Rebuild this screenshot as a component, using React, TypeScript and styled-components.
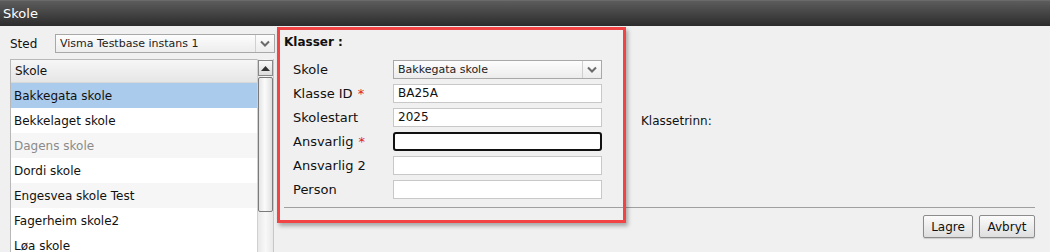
import React from "react";
import styled, { createGlobalStyle } from "styled-components";

const GlobalStyle = createGlobalStyle`
  html, body {
    margin: 0;
    padding: 0;
    background: #f0f0f0;
    overflow: hidden;
  }
  body {
    font-family: "DejaVu Sans", Verdana, sans-serif;
    font-size: 12px;
    color: #111;
  }
`;

const Window = styled.div`
  position: relative;
  width: 1050px;
  height: 252px;
  background: #f0f0f0;
  overflow: hidden;
`;

const TitleBar = styled.div`
  height: 26px;
  box-sizing: border-box;
  border-top: 1px solid #6a6a6a;
  background: linear-gradient(#5c5c5c, #2c2c2c);
  color: #fff;
  font-size: 13px;
  line-height: 25px;
  padding-left: 3px;
`;

const Body = styled.div`
  display: flex;
`;

const LeftPanel = styled.div`
  width: 265px;
  padding: 8px 0 0 10px;
  display: flex;
  flex-direction: column;
  gap: 6px;
`;

const StedRow = styled.div`
  display: flex;
  align-items: center;
`;

const StedLabel = styled.span`
  width: 45px;
  font-size: 12px;
`;

const Select = styled.div<{ $width: number }>`
  width: ${(p) => p.$width}px;
  height: 19px;
  box-sizing: border-box;
  border: 1px solid #a8a8a8;
  background: linear-gradient(#fdfdfd, #ececec);
  display: flex;
  align-items: center;
  font-size: 11px;
  color: #222;
`;

const SelectText = styled.span`
  flex: 1;
  padding-left: 4px;
`;

const SelectArrow = styled.span`
  width: 18px;
  height: 100%;
  border-left: 1px solid #d0d0d0;
  display: flex;
  align-items: center;
  justify-content: center;
`;

const ListWrap = styled.div`
  display: flex;
  height: 200px;
`;

const List = styled.div`
  width: 246px;
  border-left: 1px solid #b8b8b8;
  background: #fff;
`;

const ListHeader = styled.div`
  height: 24px;
  box-sizing: border-box;
  border-top: 1px solid #b8b8b8;
  border-bottom: 1px solid #d8d8d8;
  background: linear-gradient(#f6f6f6, #e6e6e6);
  padding-left: 4px;
  line-height: 22px;
`;

const ListRow = styled.div<{ $selected?: boolean; $alt?: boolean; $muted?: boolean }>`
  height: 25px;
  line-height: 26px;
  padding-left: 3px;
  background: ${(p) => (p.$selected ? "#abcbec" : p.$alt ? "#f6f6f6" : "#fff")};
  color: ${(p) => (p.$muted ? "#8a8a8a" : "#111")};
`;

const ScrollBar = styled.div`
  width: 17px;
  box-sizing: border-box;
  border-left: 1px solid #d0d0d0;
  border-right: 1px solid #c8c8c8;
  background: linear-gradient(90deg, #e8e8e8, #f8f8f8 50%, #e8e8e8);
  display: flex;
  flex-direction: column;
  align-items: center;
  padding-top: 1px;
`;

const ScrollButton = styled.div`
  width: 15px;
  height: 16px;
  box-sizing: border-box;
  border: 1px solid #888;
  background: linear-gradient(#fafafa, #dcdcdc);
  display: flex;
  align-items: center;
  justify-content: center;
`;

const ScrollThumb = styled.div`
  margin-top: 1px;
  width: 15px;
  height: 135px;
  box-sizing: border-box;
  border: 1px solid #7a7a7a;
  border-radius: 2px;
  background: linear-gradient(90deg, #e4e4e4, #fbfbfb 45%, #e0e0e0);
`;

const RightPanel = styled.div`
  flex: 1;
  padding: 9px 15px 0 9px;
  display: flex;
  flex-direction: column;
`;

const SectionTitle = styled.div`
  font-weight: bold;
  font-size: 12px;
  height: 18px;
`;

const Content = styled.div`
  display: flex;
  height: 154px;
`;

const Form = styled.div`
  display: grid;
  grid-template-columns: 100px 209px;
  grid-auto-rows: 19px;
  row-gap: 5px;
  padding: 7px 0 0 9px;
  align-items: center;
`;

const Label = styled.span<{ $small?: boolean }>`
  font-size: ${(p) => (p.$small ? 12 : 13)}px;
`;

const Required = styled.span`
  color: #e02020;
  margin-left: 5px;
`;

const Input = styled.div<{ $focused?: boolean }>`
  height: 19px;
  box-sizing: border-box;
  border: ${(p) => (p.$focused ? "2px solid #111" : "1px solid #c8c8c8")};
  border-radius: ${(p) => (p.$focused ? "3px" : "0")};
  background: #fff;
  padding-left: 4px;
  font-size: 12px;
  line-height: 17px;
`;

const SideColumn = styled.div`
  padding: 61px 0 0 39px;
`;

const Divider = styled.div`
  height: 1px;
  background: #a0a0a0;
`;

const ButtonRow = styled.div`
  display: flex;
  justify-content: flex-end;
  gap: 6px;
  padding-top: 7px;
`;

const Button = styled.button<{ $width: number }>`
  width: ${(p) => p.$width}px;
  height: 23px;
  padding: 0;
  font-family: "DejaVu Sans", Verdana, sans-serif;
  font-size: 12px;
  color: #111;
  border: 1px solid #8c8c8c;
  border-radius: 2px;
  background: linear-gradient(#fbfbfb, #dedede);
  box-shadow: 0 1px 1px rgba(0, 0, 0, 0.15);
`;

const Highlight = styled.div`
  position: absolute;
  left: 277px;
  top: 27px;
  width: 349px;
  height: 196px;
  box-sizing: border-box;
  border: 3px solid #f24444;
  box-shadow: 2px 3px 4px rgba(0, 0, 0, 0.3);
  pointer-events: none;
`;

const Chevron = () => (
  <svg width="10" height="7" viewBox="0 0 10 7">
    <path d="M1 1.5 L5 5.5 L9 1.5" fill="none" stroke="#6a6a6a" strokeWidth="2" />
  </svg>
);

const UpArrow = () => (
  <svg width="9" height="5" viewBox="0 0 9 5">
    <path d="M0 5 L4.5 0 L9 5 Z" fill="#333" />
  </svg>
);

const schools = [
  { name: "Bakkegata skole", selected: true },
  { name: "Bekkelaget skole" },
  { name: "Dagens skole", alt: true, muted: true },
  { name: "Dordi skole" },
  { name: "Engesvea skole Test", alt: true },
  { name: "Fagerheim skole2" },
  { name: "Løa skole" },
];

export default function App() {
  return (
    <Window>
      <GlobalStyle />
      <TitleBar>Skole</TitleBar>
      <Body>
        <LeftPanel>
          <StedRow>
            <StedLabel>Sted</StedLabel>
            <Select $width={220}>
              <SelectText>Visma Testbase instans 1</SelectText>
              <SelectArrow>
                <Chevron />
              </SelectArrow>
            </Select>
          </StedRow>
          <ListWrap>
            <List>
              <ListHeader>Skole</ListHeader>
              {schools.map((s) => (
                <ListRow key={s.name} $selected={s.selected} $alt={s.alt} $muted={s.muted}>
                  {s.name}
                </ListRow>
              ))}
            </List>
            <ScrollBar>
              <ScrollButton>
                <UpArrow />
              </ScrollButton>
              <ScrollThumb />
            </ScrollBar>
          </ListWrap>
        </LeftPanel>
        <RightPanel>
          <SectionTitle>Klasser :</SectionTitle>
          <Content>
            <Form>
              <Label>Skole</Label>
              <Select $width={209}>
                <SelectText>Bakkegata skole</SelectText>
                <SelectArrow>
                  <Chevron />
                </SelectArrow>
              </Select>
              <Label>
                Klasse ID<Required>*</Required>
              </Label>
              <Input>BA25A</Input>
              <Label>Skolestart</Label>
              <Input>2025</Input>
              <Label>
                Ansvarlig<Required>*</Required>
              </Label>
              <Input $focused />
              <Label>Ansvarlig 2</Label>
              <Input />
              <Label>Person</Label>
              <Input />
            </Form>
            <SideColumn>
              <Label $small>Klassetrinn:</Label>
            </SideColumn>
          </Content>
          <Divider />
          <ButtonRow>
            <Button $width={50}>Lagre</Button>
            <Button $width={56}>Avbryt</Button>
          </ButtonRow>
        </RightPanel>
      </Body>
      <Highlight />
    </Window>
  );
}
